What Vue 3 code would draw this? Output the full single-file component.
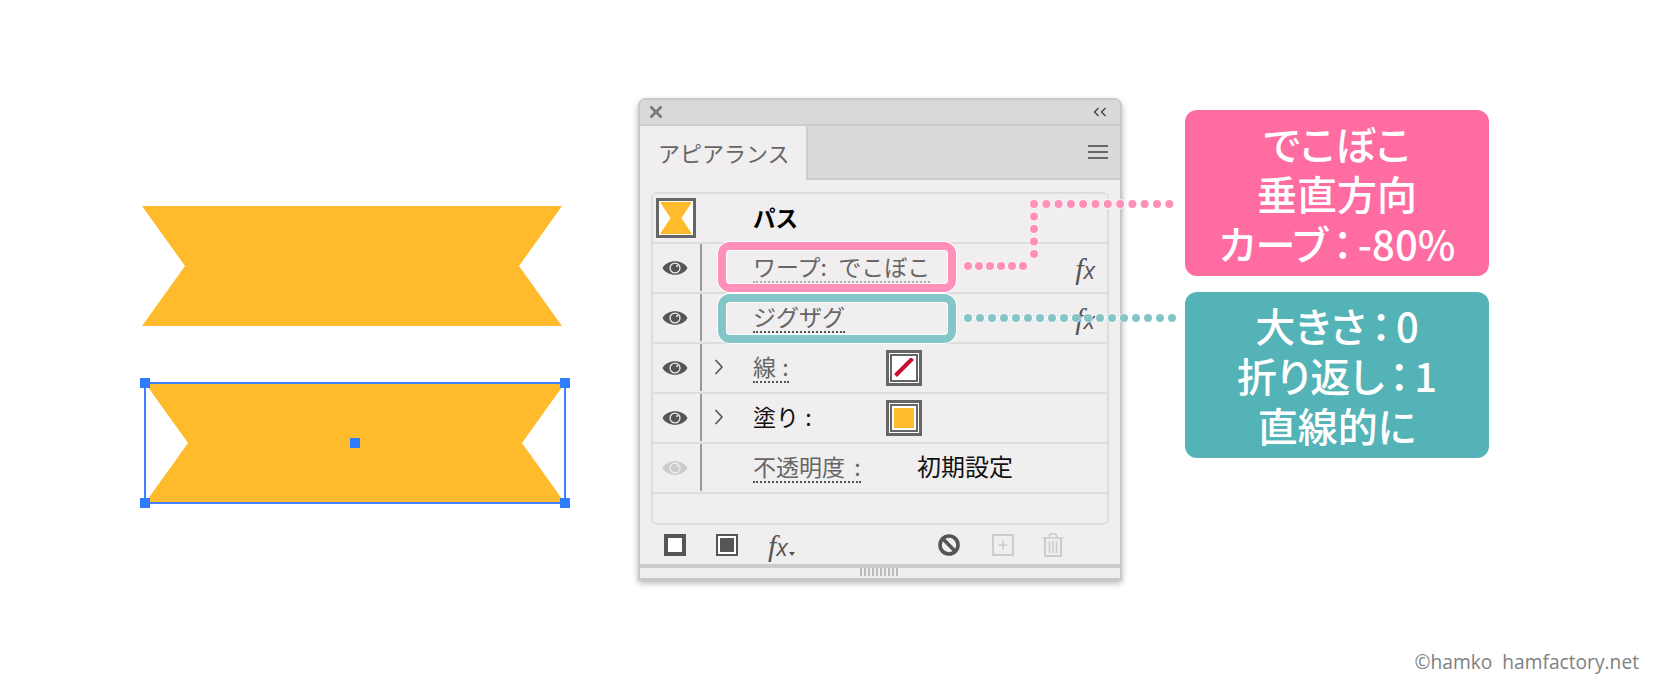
<template>
  <div class="page">
    <div class="main">
      <!-- 作例のリボン2つ -->
      <svg class="art" viewBox="130 190 450 330" width="450" height="330">
        <polygon points="142,206 562,206 519,266 562,326 142,326 185,266" fill="#ffbb2c" />
        <polygon points="145,383 565,383 522,443 565,503 145,503 188,443" fill="#ffbb2c" />
        <rect x="145" y="383" width="420" height="120" fill="none" stroke="#4080ff" stroke-width="2" />
        <g fill="#2e7dff">
          <rect x="140" y="378" width="10" height="10" />
          <rect x="560" y="378" width="10" height="10" />
          <rect x="140" y="498" width="10" height="10" />
          <rect x="560" y="498" width="10" height="10" />
          <rect x="350" y="438" width="10" height="10" />
        </g>
      </svg>

      <div class="panel">
        <div class="titlebar">
          <svg width="14" height="14" viewBox="0 0 14 14">
            <path d="M1.5 1.5L12.5 12.5M12.5 1.5L1.5 12.5" stroke="#777" stroke-width="2.6" fill="none" />
          </svg>
          <svg width="14" height="10" viewBox="0 0 14 10">
            <path d="M5.5 1L1.5 5L5.5 9M12.5 1L8.5 5L12.5 9" stroke="#444" stroke-width="1.4" fill="none" />
          </svg>
        </div>
        <div class="tabbar">
          <div class="tab">アピアランス</div>
          <div class="tab-rest">
            <div class="burger"><i></i><i></i><i></i></div>
          </div>
        </div>

        <div class="list">
          <div class="row">
            <div class="thumb">
              <svg width="34" height="34" viewBox="0 0 34 34">
                <polygon points="1,1 33,1 22.5,17 33,33 1,33 11.5,17" fill="#ffbb2c" />
              </svg>
            </div>
            <span class="path-label">パス</span>
          </div>

          <div v-for="r in rows" :key="r.label" class="row">
            <div class="eye-col">
              <svg class="eye" width="26" height="16" viewBox="0 0 26 16">
                <path d="M0.5 8C5 -1 21 -1 25.5 8C21 17 5 17 0.5 8Z" :fill="r.off ? '#ccc' : '#555'" />
                <circle cx="13" cy="8" r="5.6" fill="#eee" />
                <circle cx="13" cy="8" r="4.3" :fill="r.off ? '#ccc' : '#555'" />
                <circle cx="15" cy="6" r="1" fill="#eee" />
              </svg>
            </div>
            <div class="chev-col">
              <svg v-if="r.chev" width="10" height="16" viewBox="0 0 10 16">
                <path d="M1.5 1L8 8L1.5 15" stroke="#555" stroke-width="1.6" fill="none" />
              </svg>
            </div>
            <span class="label-box" :class="r.boxClass">
              <span class="label" :class="r.cls">{{ r.label }}</span>
            </span>
            <div v-if="r.swatch" class="swatch">
              <div class="swatch-in" :class="{ filled: r.swatch === 'fill' }">
                <svg v-if="r.swatch === 'stroke'" width="20" height="20" viewBox="0 0 20 20">
                  <path d="M1.5 17.5L18.5 0.5" stroke="#c8102e" stroke-width="4" fill="none" />
                </svg>
              </div>
            </div>
            <span v-if="r.value" class="value">{{ r.value }}</span>
            <span v-if="r.fx" class="fx row-fx"><b>f</b><em>x</em></span>
          </div>
          <div class="row-empty"></div>
        </div>

        <div class="footer">
          <div class="ico ico-new"></div>
          <div class="ico ico-fill"><i></i></div>
          <span class="fx foot-fx"><b>f</b><em>x</em><svg width="6" height="4" viewBox="0 0 6 4"><path d="M0 0H6L3 4Z" fill="#555" /></svg></span>
          <svg class="ico ico-no" width="22" height="22" viewBox="0 0 22 22">
            <circle cx="11" cy="11" r="9" stroke="#555" stroke-width="3.6" fill="none" />
            <path d="M4.6 4.6L17.4 17.4" stroke="#555" stroke-width="3.6" />
          </svg>
          <svg class="ico ico-plus" width="22" height="22" viewBox="0 0 22 22">
            <rect x="1" y="1" width="20" height="20" stroke="#ccc" stroke-width="2" fill="none" />
            <path d="M11 6.5V15.5M6.5 11H15.5" stroke="#ccc" stroke-width="1.6" />
          </svg>
          <svg class="ico ico-trash" width="22" height="24" viewBox="0 0 22 24">
            <path d="M0.5 5H21.5M7.5 5V2.2Q7.5 1 9 1H13Q14.5 1 14.5 2.2V5" stroke="#ccc" stroke-width="1.6" fill="none" />
            <path d="M3 5V23H19V5" stroke="#ccc" stroke-width="2" fill="none" />
            <path d="M7.5 8V20M11 8V20M14.5 8V20" stroke="#ccc" stroke-width="1.6" />
          </svg>
        </div>
        <div class="resize"><div class="grip"></div></div>
      </div>

      <div class="callouts">
        <div class="callout pink">でこぼこ<br />垂直方向<br />カーブ<span class="colon">：</span>-80%</div>
        <div class="callout teal">大きさ<span class="colon">：</span>0<br />折り返し<span class="colon">：</span>1<br />直線的に</div>
      </div>
    </div>

    <div class="credit">{{ credit }}</div>

    <!-- 囲みと点線の注釈 -->
    <svg class="notes" viewBox="0 0 1680 700" width="1680" height="700">
      <g fill="none">
        <rect x="722" y="246" width="230" height="42" rx="8" stroke="#fff" stroke-width="10" />
        <rect x="722" y="246" width="230" height="42" rx="8" stroke="#ff90b9" stroke-width="8" />
        <rect x="722" y="298" width="230" height="41" rx="8" stroke="#fff" stroke-width="10" />
        <rect x="722" y="298" width="230" height="41" rx="8" stroke="#84c6c8" stroke-width="8" />
        <g v-for="d in dots" :key="d.path" stroke-linecap="round">
          <path :d="d.path" stroke="#fff" stroke-opacity="0.7" stroke-width="10" :stroke-dasharray="d.dash" />
          <path :d="d.path" :stroke="d.color" stroke-width="8" :stroke-dasharray="d.dash" />
        </g>
      </g>
    </svg>
  </div>
</template>

<script setup>
const credit = '©hamko  hamfactory.net'

const rows = [
  { label: 'ワープ: でこぼこ', boxClass: 'w164', cls: 'faint', fx: true },
  { label: 'ジグザグ', boxClass: 'w164', fx: true },
  { label: '線 :', chev: true, swatch: 'stroke', boxClass: 'w133' },
  { label: '塗り :', chev: true, swatch: 'fill', boxClass: 'w133', cls: 'plain' },
  { label: '不透明度 :', off: true, value: '初期設定', boxClass: 'w164' }
]

const dots = [
  { path: 'M968 266H1034', dash: '0 11', color: '#ff90b9' },
  { path: 'M1034 254V204', dash: '0 12.5', color: '#ff90b9' },
  { path: 'M1034 204H1175', dash: '0 12.3', color: '#ff90b9' },
  { path: 'M968 318H1176', dash: '0 12', color: '#84c6c8' }
]
</script>

<style>
html,
body {
  margin: 0;
  background: #fff;
}
</style>

<style scoped>
.page {
  position: relative;
  width: 1680px;
  height: 700px;
  overflow: hidden;
  background: #fff;
  font-family: "Noto Sans CJK JP", "Noto Sans", sans-serif;
}

.main {
  display: flex;
  align-items: flex-start;
  height: 647px;
}

.art {
  display: block;
  flex: none;
  margin: 190px 0 0 130px;
}

.panel {
  flex: none;
  width: 484px;
  box-sizing: border-box;
  margin: 98px 0 0 58px;
  background: #f0eeef;
  border: 2px solid #c8c8c8;
  border-radius: 8px 8px 0 0;
  box-shadow: 0 3px 6px rgba(0, 0, 0, 0.3);
}

.titlebar {
  display: flex;
  justify-content: space-between;
  align-items: center;
  height: 24px;
  padding: 0 13px 0 9px;
  background: #d9d9d9;
  border-bottom: 2px solid #ccc;
  border-radius: 6px 6px 0 0;
}

.tabbar {
  display: flex;
  height: 54px;
}

.tab {
  width: 166px;
  padding-left: 18px;
  box-sizing: border-box;
  font-size: 22px;
  line-height: 52px;
  color: #666;
}

.tab-rest {
  flex: 1;
  display: flex;
  justify-content: flex-end;
  background: #d9d9d9;
  border-left: 2px solid #ccc;
  border-bottom: 2px solid #ccc;
}

.burger {
  margin: 19px 12px 0 0;
  width: 20px;
}

.burger i {
  display: block;
  height: 2px;
  margin-bottom: 4px;
  background: #666;
}

.list {
  margin: 12px 11px 0;
  border: 2px solid #ddd;
  border-radius: 6px;
}

.row {
  position: relative;
  display: flex;
  align-items: flex-start;
  height: 50px;
  box-sizing: border-box;
  border-bottom: 2px solid #ddd;
}

.row-empty {
  height: 29px;
}

.thumb {
  width: 40px;
  height: 40px;
  box-sizing: border-box;
  margin: 4px 0 0 3px;
  border: 3px solid #666;
  background: #fff;
}

.thumb svg {
  display: block;
}

.path-label {
  margin-left: 57px;
  font-size: 22.5px;
  line-height: 46px;
  font-weight: 700;
  color: #000;
}

.eye-col {
  display: flex;
  align-items: center;
  justify-content: center;
  width: 44px;
  height: 47px;
  padding-right: 3px;
  border-right: 2px solid #999;
}

.eye {
  display: block;
}

.chev-col {
  width: 51px;
  padding: 15px 0 0 12px;
  box-sizing: border-box;
}

.chev-col svg {
  display: block;
}

.label-box {
  flex: none;
  display: block;
}

.w133 {
  width: 133px;
}

.w164 {
  width: 164px;
}

.label {
  display: inline-block;
  height: 37px;
  font-size: 23px;
  line-height: 44px;
  word-spacing: 4px;
  color: #666;
  white-space: nowrap;
  border-bottom: 2px dotted #555;
}

.w133 .label {
  word-spacing: 1px;
}

.label.faint {
  word-spacing: 6px;
  border-bottom-color: #aaa;
}

.label.plain {
  color: #111;
  border-bottom: 0;
}

.value {
  font-size: 24px;
  line-height: 44px;
  color: #111;
}

.swatch {
  width: 36px;
  height: 36px;
  box-sizing: border-box;
  margin-top: 6px;
  padding: 1px;
  border: 3px solid #666;
  background: #fff;
}

.swatch-in {
  width: 28px;
  height: 28px;
  box-sizing: border-box;
  padding: 2px;
  border: 2px solid #666;
  background: #fff;
}

.swatch-in svg {
  display: block;
}

.swatch-in.filled {
  background: #ffbb2c content-box;
}

.fx {
  font-size: 30px;
  line-height: 1;
  color: #555;
  white-space: nowrap;
}

.fx b {
  font-family: "Liberation Serif", serif;
  font-style: italic;
  font-weight: 400;
}

.fx em {
  font-family: "Open Sans", sans-serif;
  font-size: 24px;
  font-style: italic;
  margin-left: 0;
}

.row-fx {
  position: absolute;
  right: 12px;
  top: 7px;
}

.footer {
  display: flex;
  align-items: center;
  height: 39px;
  padding-left: 24px;
}

.ico {
  flex: none;
  display: block;
  box-sizing: border-box;
}

.ico-new {
  width: 22px;
  height: 22px;
  border: 4px solid #555;
  background: #fff;
}

.ico-fill {
  width: 22px;
  height: 22px;
  margin-left: 30px;
  padding: 2px;
  border: 2px solid #555;
  background: #fff;
}

.ico-fill i {
  display: block;
  width: 14px;
  height: 14px;
  background: #555;
}

.foot-fx {
  flex: none;
  width: 28px;
  margin-left: 30px;
}

.foot-fx svg {
  margin-left: 1px;
}

.ico-no {
  margin-left: 142px;
}

.ico-plus {
  margin-left: 32px;
}

.ico-trash {
  margin-left: 28px;
}

.resize {
  display: flex;
  justify-content: center;
  height: 10px;
  border-top: 4px solid #ccc;
}

.grip {
  width: 38px;
  height: 8px;
  margin-left: -2px;
  background: repeating-linear-gradient(90deg, #bbb 0 2px, transparent 2px 4px);
}

.callouts {
  flex: none;
  display: flex;
  flex-direction: column;
  gap: 16px;
  margin: 110px 0 0 63px;
}

.callout {
  width: 304px;
  height: 166px;
  padding: 8px 0;
  box-sizing: border-box;
  border-radius: 12px;
  font-size: 40px;
  font-weight: 500;
  font-feature-settings: "palt";
  line-height: 50px;
  text-align: center;
  color: #fff;
}

.colon {
  margin: 0 5px;
}

.pink {
  background: #ff6ca1;
}

.teal {
  background: #54b3b7;
}

.credit {
  padding-right: 41px;
  font-family: "Open Sans", sans-serif;
  font-size: 19.2px;
  line-height: 30px;
  text-align: right;
  color: #808080;
  white-space: pre;
}

.notes {
  position: absolute;
  top: 0;
  left: 0;
  pointer-events: none;
}
</style>
